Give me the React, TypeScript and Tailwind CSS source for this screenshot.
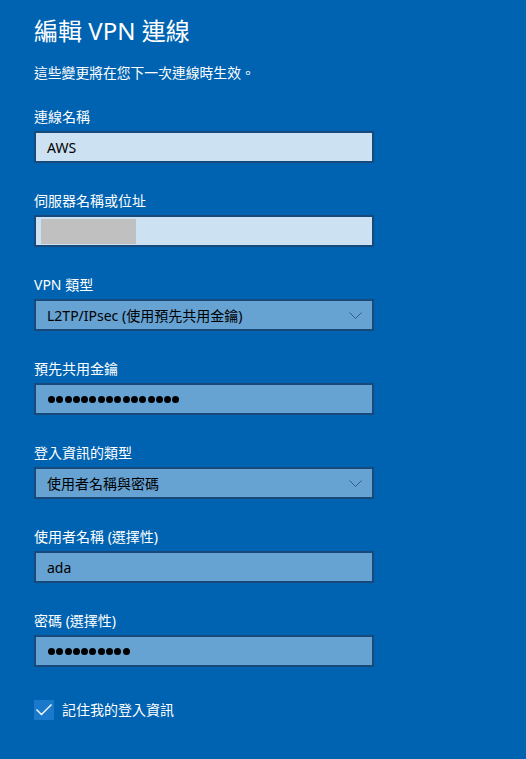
import React from "react";

const FONT = { fontFamily: '"Noto Sans", "Noto Sans CJK TC", sans-serif' };

function Label({ children }: { children: React.ReactNode }) {
  return <div className="text-[14px] leading-[20px] text-white mb-[4px]">{children}</div>;
}

function Chevron() {
  return (
    <svg width="13" height="7" viewBox="0 0 13 7" className="shrink-0">
      <path d="M0.5 0.5 L6.5 6.5 L12.5 0.5" fill="none" stroke="#2d5d8a" strokeWidth="1" />
    </svg>
  );
}

function Dots({ n }: { n: number }) {
  return (
    <div className="flex items-center gap-[1.3px]">
      {Array.from({ length: n }).map((_, i) => (
        <div key={i} className="w-[7px] h-[7px] rounded-full bg-black" />
      ))}
    </div>
  );
}

export default function App() {
  return (
    <div className="min-h-screen w-full bg-[#0063B1] text-white" style={FONT}>
      <div className="pl-[34px] pt-[15px] w-[374px]">
        <div className="text-[24px] leading-[32px] text-white">編輯 VPN 連線</div>
        <div className="mt-[16px] text-[13.8px] leading-[20px]">這些變更將在您下一次連線時生效。</div>

        <div className="mt-[24px] flex flex-col gap-[28px]">
          <div>
            <Label>連線名稱</Label>
            <div className="h-[32px] border-2 border-[#17497a] bg-[#CCE1F2] flex items-center pl-[11px] text-[14px] text-black">
              AWS
            </div>
          </div>
          <div>
            <Label>伺服器名稱或位址</Label>
            <div className="h-[32px] border-2 border-[#17497a] bg-[#CCE1F2] flex items-center pl-[5px]">
              <div className="w-[95px] h-[25px] bg-[#C0C0C0]" />
            </div>
          </div>
          <div>
            <Label>VPN 類型</Label>
            <div className="h-[32px] border-2 border-[#17497a] bg-[#66A2D2] flex items-center justify-between pl-[11px] pr-[10px] text-[14px] text-black">
              <span>L2TP/IPsec (使用預先共用金鑰)</span>
              <Chevron />
            </div>
          </div>
          <div>
            <Label>預先共用金鑰</Label>
            <div className="h-[32px] border-2 border-[#17497a] bg-[#66A2D2] flex items-center pl-[12px]">
              <Dots n={16} />
            </div>
          </div>
          <div>
            <Label>登入資訊的類型</Label>
            <div className="h-[32px] border-2 border-[#17497a] bg-[#66A2D2] flex items-center justify-between pl-[11px] pr-[10px] text-[14px] text-black">
              <span>使用者名稱與密碼</span>
              <Chevron />
            </div>
          </div>
          <div>
            <Label>使用者名稱 (選擇性)</Label>
            <div className="h-[32px] border-2 border-[#17497a] bg-[#66A2D2] flex items-center pl-[11px] text-[14px] text-black">
              ada
            </div>
          </div>
          <div>
            <Label>密碼 (選擇性)</Label>
            <div className="h-[32px] border-2 border-[#17497a] bg-[#66A2D2] flex items-center pl-[12px]">
              <Dots n={10} />
            </div>
          </div>
        </div>

        <div className="mt-[33px] flex items-center gap-[8px]">
          <div className="w-[20px] h-[20px] bg-[#1a79cb] flex items-center justify-center">
            <svg width="20" height="20" viewBox="0 0 20 20">
              <path d="M2.5 9.5 L7.5 14.5 L17.5 4.5" fill="none" stroke="white" strokeWidth="1.4" />
            </svg>
          </div>
          <span className="text-[14px] leading-[20px] text-white">記住我的登入資訊</span>
        </div>
      </div>
    </div>
  );
}
